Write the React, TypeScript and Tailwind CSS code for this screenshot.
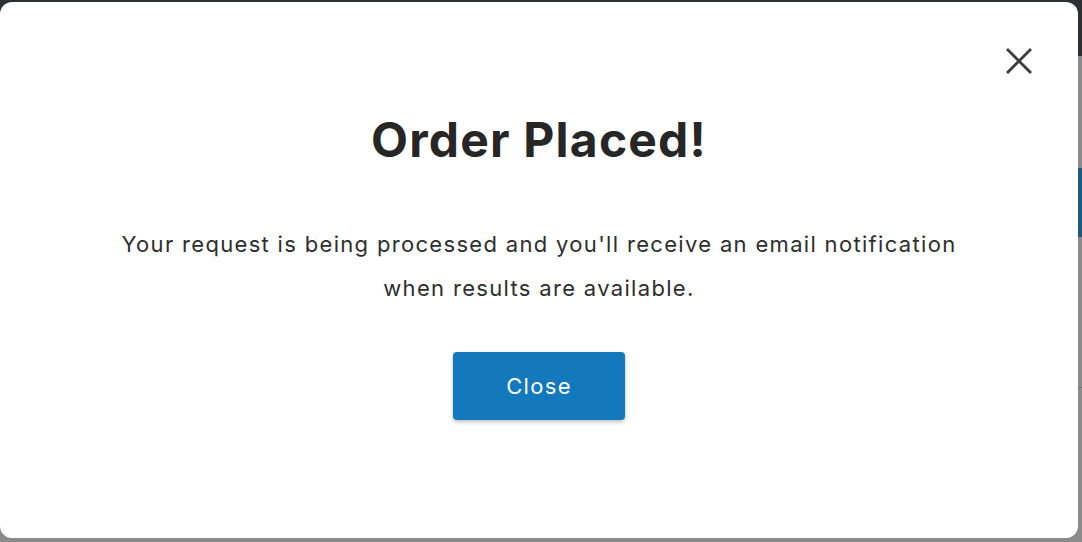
export default function App() {
  return (
    <div className="relative h-[542px] w-[1082px] overflow-hidden bg-[#8b8b8b] font-['Inter',sans-serif]">
      {/* dimmed page behind the dialog */}
      <div className="h-[56px] bg-[#2c2f34]" />
      <div className="mt-[112px] h-[69px] bg-[#1d5a80]" />
      <div className="mt-[150px] border-t border-dotted border-[#5a5a5a]" />

      <div className="absolute left-0 top-[2px] flex h-[536px] w-[1078px] flex-col items-center rounded-xl bg-white">
        <button className="absolute right-[46px] top-[46px] text-[#3b3b3b]" aria-label="Close">
          <svg width="26" height="26" viewBox="0 0 26 26" fill="none" stroke="currentColor" strokeWidth="2.8" strokeLinecap="square">
            <path d="M2 2 L24 24 M24 2 L2 24" />
          </svg>
        </button>

        <h1 className="mt-[106px] text-[48px] font-bold leading-[64px] tracking-[0.025em] text-[#262626]">Order Placed!</h1>

        <p className="mt-[50px] text-center text-[22px] leading-[44px] tracking-[0.06em] text-[#2e2e2e]">
          Your request is being processed and you'll receive an email notification
          <br />
          when results are available.
        </p>

        <button className="mt-[42px] h-[68px] w-[172px] rounded-[4px] bg-[#1478bc] text-[22px] tracking-[0.06em] text-white shadow-[0_2px_4px_rgba(0,0,0,0.25)]">
          Close
        </button>
      </div>
    </div>
  );
}
